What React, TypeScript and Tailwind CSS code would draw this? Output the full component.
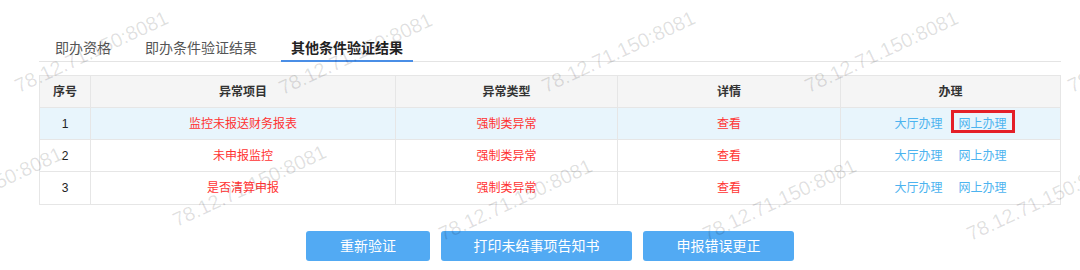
import React from "react";

const rows = [
  { no: "1", item: "监控未报送财务报表", active: true },
  { no: "2", item: "未申报监控", active: false },
  { no: "3", item: "是否清算申报", active: false },
];

const marks: { cls: string }[] = [
  { cls: "left-[20px] top-[76px]" },
  { cls: "left-[284px] top-[78px]" },
  { cls: "left-[547px] top-[76px]" },
  { cls: "left-[810px] top-[76px]" },
  { cls: "left-[1073px] top-[76px]" },
  { cls: "left-[-86px] top-[212px]" },
  { cls: "left-[178px] top-[210px]" },
  { cls: "left-[444px] top-[224px]" },
  { cls: "left-[708px] top-[224px]" },
  { cls: "left-[972px] top-[224px]" },
];

export default function App() {
  return (
    <div
      className="relative w-[1080px] h-[270px] bg-white overflow-hidden"
      style={{ fontFamily: '"Liberation Sans", "Noto Sans CJK SC", sans-serif' }}
    >
      <div className="ml-[39px] w-[1022px]">
        {/* Tabs */}
        <div className="flex gap-[14px] pt-[38px] pl-[6px] border-b border-[#e4e4e4]">
          <div className="px-[10px] pb-[3px] text-[14px] leading-[20px] text-[#555]">即办资格</div>
          <div className="px-[10px] pb-[3px] text-[14px] leading-[20px] text-[#555]">即办条件验证结果</div>
          <div className="px-[10px] pb-[1px] -mb-px border-b-2 border-[#4a8ee6] text-[14px] leading-[20px] font-bold text-[#222]">
            其他条件验证结果
          </div>
        </div>

        {/* Table */}
        <div className="mt-[13px] border border-[#e6e6e6] text-[12px] leading-[18px]">
          <div className="flex h-[32px] bg-[#f5f5f5] border-b border-[#e6e6e6] font-bold text-[#333]">
            <div className="w-[51px] border-r border-[#e6e6e6] flex items-center justify-center">序号</div>
            <div className="w-[305px] border-r border-[#e6e6e6] flex items-center justify-center">异常项目</div>
            <div className="w-[222px] border-r border-[#e6e6e6] flex items-center justify-center">异常类型</div>
            <div className="w-[223px] border-r border-[#e6e6e6] flex items-center justify-center">详情</div>
            <div className="flex-1 flex items-center justify-center">办理</div>
          </div>
          {rows.map((r, i) => (
            <div
              key={r.no}
              className={
                "flex h-[32px] " +
                (i < rows.length - 1 ? "border-b border-[#e6e6e6] " : "h-[31px] ") +
                (r.active ? "bg-[#e8f5fc]" : "bg-white")
              }
            >
              <div className="w-[51px] border-r border-[#e6e6e6] flex items-center justify-center text-[#222]">{r.no}</div>
              <div className="w-[305px] border-r border-[#e6e6e6] flex items-center justify-center text-[#ff3333]">{r.item}</div>
              <div className="w-[222px] border-r border-[#e6e6e6] flex items-center justify-center text-[#ff3333]">强制类异常</div>
              <div className="w-[223px] border-r border-[#e6e6e6] flex items-center justify-center text-[#ff3333]">查看</div>
              <div className="flex-1 flex items-center justify-center gap-[16px] text-[#4cb3ef]">
                <span>大厅办理</span>
                <span className="relative">
                  网上办理
                  {r.active && (
                    <span className="absolute -left-[8px] -right-[8px] -top-[5px] bottom-0 border-[3px] border-[#e41f27]" />
                  )}
                </span>
              </div>
            </div>
          ))}
        </div>

        {/* Buttons */}
        <div className="flex justify-center gap-[11px] mt-[26px]">
          <button className="w-[124px] h-[30px] rounded-[3px] bg-[#52aaf3] text-white text-[14px]">重新验证</button>
          <button className="w-[191px] h-[30px] rounded-[3px] bg-[#52aaf3] text-white text-[14px]">打印未结事项告知书</button>
          <button className="w-[151px] h-[30px] rounded-[3px] bg-[#52aaf3] text-white text-[14px]">申报错误更正</button>
        </div>
      </div>

      {/* Watermarks */}
      <div className="pointer-events-none absolute inset-0">
        {marks.map((m, i) => (
          <div
            key={i}
            className={
              "absolute whitespace-nowrap text-[20px] leading-[20px] text-black/[0.12] origin-bottom-left -rotate-[25deg] " +
              m.cls
            }
          >
            78.12.71.150:8081
          </div>
        ))}
      </div>
    </div>
  );
}
